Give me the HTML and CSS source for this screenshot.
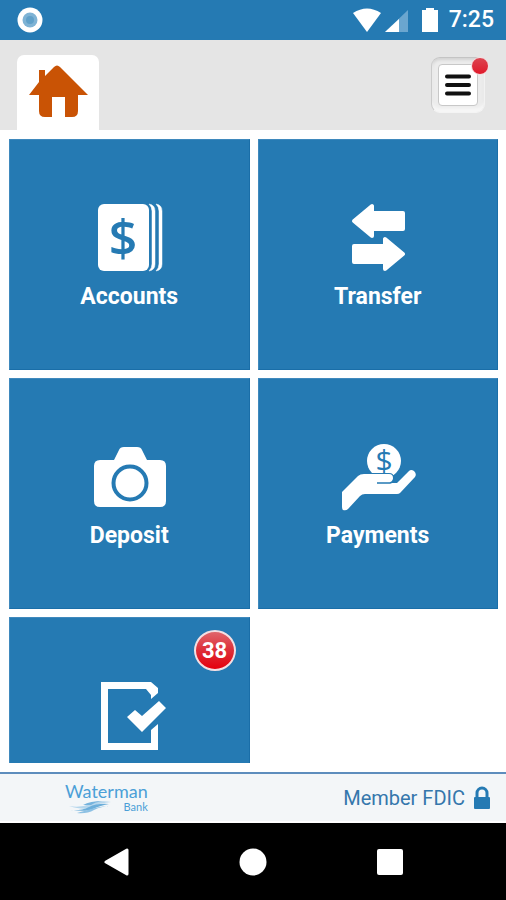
FILE: index.html
```html
<!DOCTYPE html>
<html lang="en">
<head>
<meta charset="utf-8">
<meta name="viewport" content="width=device-width, initial-scale=1">
<title>Waterman Bank</title>
<link rel="stylesheet" href="styles.css">
</head>
<body>
<div class="status">
  <svg class="status-dot" width="26" height="26" viewBox="0 0 26 26" aria-hidden="true">
    <circle cx="13" cy="13" r="12.5" fill="#fff"/>
    <circle cx="13" cy="13" r="7.5" fill="#7eb3d5"/>
    <circle cx="13" cy="13" r="4" fill="#5fa0c9"/>
  </svg>
  <svg class="status-icons" width="88" height="28" viewBox="0 0 88 28" aria-hidden="true">
    <path d="M1 7Q15 -2 29 7L15 26Z" fill="#fff"/>
    <path d="M56 4V26H33Z" fill="#6ba6cf"/>
    <path d="M47 13V26H33Z" fill="#fff"/>
    <path d="M70 4h4V2h8v2h4v22H70Z" fill="#fff"/>
  </svg>
  <time class="clock">7:25</time>
</div>

<header class="topbar">
  <a class="home" href="#" aria-label="Home">
    <svg width="60" height="54" viewBox="0 0 60 54" aria-hidden="true">
      <path d="M11 17V5h6v6L26 2Q29 -1 32 2L60 30H50V46Q50 52 44 52H37V32H24V52H17Q11 52 11 46V30H1Z" fill="#c95305"/>
    </svg>
  </a>
  <button class="menu" type="button" aria-label="Menu">
    <span class="menu-face">
      <svg width="26" height="22" viewBox="0 0 26 22" aria-hidden="true">
        <path d="M2 2.500H24M2 11H24M2 19.500H24" stroke="#111" stroke-width="4" stroke-linecap="round"/>
      </svg>
    </span>
    <span class="menu-alert"></span>
  </button>
</header>

<main class="content">
  <nav class="tiles">
    <a class="tile" href="#">
      <svg width="80" height="72" viewBox="0 0 80 72" aria-hidden="true">
        <rect x="9" y="3" width="51" height="67" rx="6" fill="#fff"/>
        <path d="M60 3Q66 4 66 10V63Q66 69 60 70Q63 67 63 63V10Q63 6 60 3Z" fill="#fff" stroke="#fff" stroke-width=".5"/>
        <path d="M67 3Q73 4 73 10V63Q73 69 67 70Q70 67 70 63V10Q70 6 67 3Z" fill="#fff" stroke="#fff" stroke-width=".5"/>
        <text class="dollar-large" x="34" y="55">$</text>
      </svg>
      <span class="label">Accounts</span>
    </a>
    <a class="tile" href="#">
      <svg width="80" height="72" viewBox="0 0 80 72" aria-hidden="true">
        <g fill="#fff" stroke="#fff" stroke-width="4" stroke-linejoin="round">
          <path d="M16 20L34 5V12H65V28H34V35Z"/>
          <path d="M65 53L47 38V45H16V61H47V68Z"/>
        </g>
      </svg>
      <span class="label">Transfer</span>
    </a>
    <a class="tile" href="#">
      <svg width="80" height="72" viewBox="0 0 80 72" aria-hidden="true">
        <path d="M11 20H25L30 10Q31 7 35 7H48Q52 7 53 10L58 20H71Q77 20 77 26V61Q77 67 71 67H11Q5 67 5 61V26Q5 20 11 20Z" fill="#fff"/>
        <circle cx="41" cy="43" r="16.500" fill="none" stroke="#257ab3" stroke-width="4"/>
      </svg>
      <span class="label">Deposit</span>
    </a>
    <a class="tile" href="#">
      <svg width="80" height="72" viewBox="0 0 80 72" aria-hidden="true">
        <circle cx="46" cy="21" r="17" fill="#fff"/>
        <text class="dollar-small" x="46" y="31">$</text>
        <path d="M4 52L20 36Q22 34 26 34H51Q55 34 55 38Q55 43 51 43H59L71 31Q73 29 76 31Q79 34 77 37L62 53Q61 54 59 54H27Q24 54 22 56L10 69Q8 71 5 70Q4 69 4 67Z" fill="#fff" stroke="#257ab3" stroke-width="2" paint-order="stroke"/>
        <path d="M39 43H52Q56 42 56 37" fill="none" stroke="#257ab3" stroke-width="1.500"/>
      </svg>
      <span class="label">Payments</span>
    </a>
    <a class="tile" href="#" aria-label="Approvals, 38 pending">
      <svg width="80" height="72" viewBox="0 0 80 72" aria-hidden="true">
        <path d="M12 3H62L69 9V14L62 20V16L57 10H19V64H62V51L69 45V71H12Z" fill="#fff"/>
        <path d="M38 38L46 31L53 37L70 22L77 29L53 53Z" fill="#fff"/>
      </svg>
      <span class="badge">38</span>
    </a>
  </nav>
</main>

<footer class="footer">
  <div class="brand">
    <span class="brand-name">Waterman</span>
    <span class="brand-sub">
      <svg width="50" height="14" viewBox="0 0 50 14" aria-hidden="true">
        <path d="M4 6Q16 8 25 4T46 2Q34 3 27 7T4 6Z" fill="#b5d6ec"/>
        <path d="M5 10Q16 11 24 7T44 4Q34 6 28 9T5 10Z" fill="#6caeda"/>
        <path d="M12 13Q22 14 29 10T49 6Q37 6 30 8T12 13Z" fill="#8dc1e4"/>
        <path d="M18 5Q25 1 38 1Q30 2 26 5Z" fill="#75b3dd"/>
      </svg>
      <span class="brand-bank">Bank</span>
    </span>
  </div>
  <div class="fdic">
    <span>Member FDIC</span>
    <svg width="18" height="24" viewBox="0 0 18 24" aria-hidden="true">
      <path d="M4 12V7a5 5 0 0 1 10 0v5" fill="none" stroke="#257ab3" stroke-width="3"/>
      <rect x="1" y="11" width="16" height="12" rx="1" fill="#257ab3"/>
    </svg>
  </div>
</footer>

<div class="navbar">
  <button type="button" aria-label="Back"><svg width="28" height="28" viewBox="0 0 28 28"><path d="M4 14L25 2V26Z" fill="#fff" stroke="#fff" stroke-width="3" stroke-linejoin="round"/></svg></button>
  <button type="button" aria-label="Home screen"><svg width="28" height="28" viewBox="0 0 28 28"><circle cx="14" cy="14" r="13.500" fill="#fff"/></svg></button>
  <button type="button" aria-label="Recent apps"><svg width="28" height="28" viewBox="0 0 28 28"><rect x="1" y="1" width="26" height="26" rx="2" fill="#fff"/></svg></button>
</div>
</body>
</html>
```

FILE: styles.css
```css
* {
  box-sizing: border-box;
}

body {
  margin: 0;
  height: 100vh;
  display: flex;
  flex-direction: column;
  overflow: hidden;
  background: #fff;
  font-family: Roboto, "Liberation Sans", sans-serif;
}

svg {
  display: block;
}

button {
  border: 0;
  padding: 0;
  cursor: pointer;
}

.status {
  flex: none;
  display: flex;
  align-items: center;
  height: 40px;
  padding: 0 12px 0 17px;
  background: #257ab3;
  color: #fff;
}

.status-icons {
  margin: 0 9px 0 auto;
}

.clock {
  font-size: 23px;
  line-height: 40px;
  font-weight: 500;
}

.topbar {
  flex: none;
  display: flex;
  align-items: flex-end;
  justify-content: space-between;
  height: 90px;
  padding: 0 21px 0 17px;
  background: #e5e5e5;
}

.home {
  display: flex;
  justify-content: center;
  width: 82px;
  height: 75px;
  padding-top: 10px;
  border-radius: 7px 7px 0 0;
  background: #fff;
}

.menu {
  position: relative;
  width: 54px;
  height: 56px;
  margin-bottom: 17px;
  padding: 6px;
  border-radius: 9px;
  border: 1px solid;
  border-color: #c4c4c4 #f2f2f2 #f4f4f4 #cbcbcb;
  background: #ececec;
  box-shadow: inset 0 -4px 3px #f6f6f6, inset 0 2px 3px #d2d2d2;
}

.menu-face {
  display: flex;
  align-items: center;
  justify-content: center;
  height: 42px;
  border: 1px solid #c8c8c8;
  border-radius: 4px;
  background: #fff;
}

.menu-alert {
  position: absolute;
  top: -1px;
  right: -5px;
  width: 18px;
  height: 18px;
  border: 1px solid #f6dfe1;
  border-radius: 50%;
  background: linear-gradient(#dc4450, #e01a2b);
}

.content {
  flex: 1;
  min-height: 0;
  display: flex;
  padding: 9px 8px 9px 9px;
}

.tiles {
  flex: 1;
  display: grid;
  grid-template-columns: 1fr 1fr;
  grid-auto-rows: 231px;
  gap: 8px;
  overflow: hidden;
}

.tile {
  position: relative;
  display: flex;
  flex-direction: column;
  align-items: center;
  gap: 10px;
  padding-top: 61px;
  border: 1px solid #1a6ea8;
  border-top-color: #3f89bd;
  border-left-color: #3f89bd;
  background: #257ab3;
  color: #fff;
  text-decoration: none;
}

.label {
  font-size: 23px;
  line-height: 28px;
  font-weight: 700;
}

.dollar-large,
.dollar-small {
  fill: #257ab3;
  font-family: "Open Sans", sans-serif;
  text-anchor: middle;
}

.dollar-large {
  font-size: 50px;
  font-weight: 600;
}

.dollar-small {
  font-size: 30px;
  font-weight: 400;
}

.badge {
  position: absolute;
  top: 12px;
  right: 13px;
  width: 42px;
  height: 41px;
  border: 2px solid #f3dfe3;
  border-radius: 50%;
  background: linear-gradient(#e0656b, #dd2e38 50%, #e5000d);
  font-size: 22px;
  line-height: 37px;
  font-weight: 700;
  text-align: center;
}

.footer {
  flex: none;
  display: flex;
  align-items: center;
  justify-content: space-between;
  height: 51px;
  padding: 0 15px 0 65px;
  border-top: 2px solid #5d8dbd;
  border-bottom: 2px solid #fff;
  background: #f3f6f8;
}

.brand {
  display: flex;
  flex-direction: column;
  color: #4b9fd7;
  font-family: Lato, sans-serif;
}

.brand-name {
  font-size: 18px;
  line-height: 18px;
}

.brand-sub {
  display: flex;
  justify-content: space-between;
}

.brand-bank {
  font-size: 11px;
  line-height: 14px;
}

.fdic {
  display: flex;
  align-items: center;
  gap: 8px;
  color: #3577ac;
  font-size: 20px;
  line-height: 24px;
}

.navbar {
  flex: none;
  display: flex;
  align-items: center;
  justify-content: center;
  gap: 109px;
  height: 77px;
  background: #000;
}

.navbar button {
  background: none;
}
```
